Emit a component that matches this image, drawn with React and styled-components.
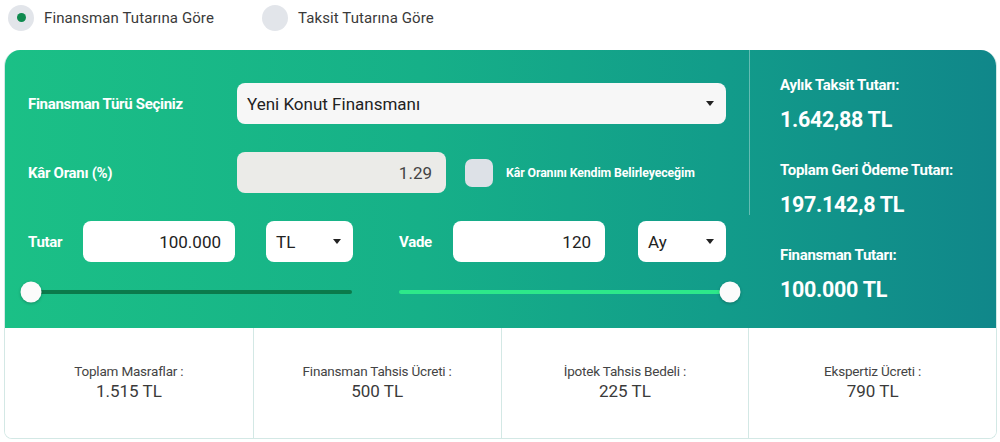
import React from "react";
import styled, { createGlobalStyle } from "styled-components";

const Global = createGlobalStyle`
  * { box-sizing: border-box; }
  body {
    margin: 0;
    background: #ffffff;
    font-family: Roboto, "Noto Sans", sans-serif;
    color: #333;
  }
`;

const Page = styled.div`
  width: 1000px;
  height: 442px;
  padding: 5px 3px 0 4px;
`;

const RadioRow = styled.div`
  display: flex;
  align-items: center;
  height: 25px;
  padding-left: 4px;
`;

const RadioItem = styled.label`
  display: flex;
  align-items: center;
  gap: 10px;
  width: 254px;
  font-size: 15px;
  letter-spacing: 0.1px;
  color: #3a3a3a;
`;

const RadioCircle = styled.span`
  width: 26px;
  height: 26px;
  border-radius: 50%;
  background: #e2e5ea;
  display: flex;
  align-items: center;
  justify-content: center;
  &::after {
    content: "";
    width: 9px;
    height: 9px;
    border-radius: 50%;
    background: ${(p) => (p.checked ? "#0f8a4f" : "transparent")};
  }
`;

const Card = styled.div`
  margin-top: 20px;
  border-radius: 16px 16px 8px 8px;
  overflow: hidden;
  border: 1px solid #d3e8e5;
  border-top: none;
`;

const Top = styled.div`
  display: grid;
  grid-template-columns: 744px 1fr;
  height: 278px;
  background: linear-gradient(90deg, #1bc086 0%, #16b088 42%, #129c8a 72%, #10878a 100%);
  color: #fff;
`;

const Form = styled.div`
  padding: 33px 23px 0 23px;
  display: flex;
  flex-direction: column;
  gap: 28px;
`;

const Row = styled.div`
  display: flex;
  align-items: center;
  height: 41px;
`;

const Label = styled.span`
  width: ${(p) => p.w}px;
  flex-shrink: 0;
  font-size: 15px;
  font-weight: 700;
  letter-spacing: -0.3px;
  color: #fff;
`;

const Field = styled.div`
  height: 41px;
  width: ${(p) => (p.w ? `${p.w}px` : "auto")};
  flex: ${(p) => (p.w ? "none" : 1)};
  margin-left: ${(p) => p.ml || 0}px;
  border-radius: 8px;
  background: ${(p) => p.bg || "#ffffff"};
  display: flex;
  align-items: center;
  justify-content: ${(p) => (p.right ? "flex-end" : "space-between")};
  padding: 0 ${(p) => (p.right ? 14 : 11)}px 0 10px;
  font-size: 17px;
  color: ${(p) => p.color || "#222"};
`;

const Caret = styled.span`
  width: 0;
  height: 0;
  border-left: 4.5px solid transparent;
  border-right: 4.5px solid transparent;
  border-top: 5px solid #222;
  margin-right: 1px;
`;

const Check = styled.span`
  width: 28px;
  height: 28px;
  border-radius: 7px;
  background: #dde1e7;
  margin-left: 19px;
  flex-shrink: 0;
`;

const CheckLabel = styled.span`
  margin-left: 13px;
  font-size: 12.3px;
  font-weight: 700;
  letter-spacing: -0.1px;
`;

const Group = styled.div`
  display: flex;
  align-items: center;
  margin-left: ${(p) => p.ml || 0}px;
`;

const SliderRow = styled.div`
  display: flex;
  align-items: center;
  height: 21px;
  margin-top: -9px;
`;

const Track = styled.div`
  position: relative;
  flex-shrink: 0;
  width: ${(p) => p.w}px;
  margin-left: ${(p) => p.ml}px;
  height: 4px;
  border-radius: 2px;
  background: ${(p) => p.color};
`;

const Thumb = styled.span`
  position: absolute;
  top: 50%;
  left: ${(p) => p.at}%;
  width: 21px;
  height: 21px;
  border-radius: 50%;
  background: #fbfbfb;
  box-shadow: 0 1px 3px rgba(0, 0, 0, 0.25);
  transform: translate(-50%, -50%);
`;

const Summary = styled.div`
  position: relative;
  padding: 26px 0 0 31px;
  display: flex;
  flex-direction: column;
  &::before {
    content: "";
    position: absolute;
    left: 0;
    top: 0;
    width: 1px;
    height: 165px;
    background: rgba(255, 255, 255, 0.35);
  }
`;

const SumLabel = styled.div`
  font-size: 15px;
  font-weight: 700;
  letter-spacing: -0.3px;
  line-height: 18px;
`;

const SumValue = styled.div`
  font-size: 21.5px;
  font-weight: 700;
  letter-spacing: -0.3px;
  line-height: 26px;
  margin-top: 13px;
  margin-bottom: 28px;
`;

const Bottom = styled.div`
  display: grid;
  grid-template-columns: repeat(4, 1fr);
  height: 110px;
  background: #fff;
`;

const Cost = styled.div`
  display: flex;
  flex-direction: column;
  align-items: center;
  justify-content: center;
  padding-bottom: 2px;
  border-left: ${(p) => (p.first ? "none" : "1px solid #d3e8e5")};
  color: #444;
`;

const CostLabel = styled.div`
  font-size: 13.5px;
  letter-spacing: -0.2px;
  line-height: 18px;
`;

const CostValue = styled.div`
  font-size: 17px;
  line-height: 22px;
  color: #3a3a3a;
`;

const costs = [
  ["Toplam Masraflar :", "1.515 TL"],
  ["Finansman Tahsis Ücreti :", "500 TL"],
  ["İpotek Tahsis Bedeli :", "225 TL"],
  ["Ekspertiz Ücreti :", "790 TL"],
];

export default function App() {
  return (
    <Page>
      <Global />
      <RadioRow>
        <RadioItem>
          <RadioCircle checked />
          Finansman Tutarına Göre
        </RadioItem>
        <RadioItem>
          <RadioCircle />
          Taksit Tutarına Göre
        </RadioItem>
      </RadioRow>

      <Card>
        <Top>
          <Form>
            <Row>
              <Label w={209}>Finansman Türü Seçiniz</Label>
              <Field bg="#f7f7f7">
                Yeni Konut Finansmanı
                <Caret />
              </Field>
            </Row>
            <Row>
              <Label w={209}>Kâr Oranı (%)</Label>
              <Field w={209} bg="#ebebe8" color="#444" right>
                1.29
              </Field>
              <Check />
              <CheckLabel>Kâr Oranını Kendim Belirleyeceğim</CheckLabel>
            </Row>
            <Row>
              <Group>
                <Label w={55}>Tutar</Label>
                <Field w={152} right>
                  100.000
                </Field>
                <Field w={87} ml={31}>
                  TL
                  <Caret />
                </Field>
              </Group>
              <Group ml={46}>
                <Label w={54}>Vade</Label>
                <Field w={152} right>
                  120
                </Field>
                <Field w={88} ml={33}>
                  Ay
                  <Caret />
                </Field>
              </Group>
            </Row>
            <SliderRow>
              <Track w={321} ml={3} color="#0b7a4b">
                <Thumb at={0} />
              </Track>
              <Track w={331} ml={47} color="#2de88a">
                <Thumb at={100} />
              </Track>
            </SliderRow>
          </Form>

          <Summary>
            <SumLabel>Aylık Taksit Tutarı:</SumLabel>
            <SumValue>1.642,88 TL</SumValue>
            <SumLabel>Toplam Geri Ödeme Tutarı:</SumLabel>
            <SumValue>197.142,8 TL</SumValue>
            <SumLabel>Finansman Tutarı:</SumLabel>
            <SumValue>100.000 TL</SumValue>
          </Summary>
        </Top>

        <Bottom>
          {costs.map(([label, value], i) => (
            <Cost key={label} first={i === 0}>
              <CostLabel>{label}</CostLabel>
              <CostValue>{value}</CostValue>
            </Cost>
          ))}
        </Bottom>
      </Card>
    </Page>
  );
}
